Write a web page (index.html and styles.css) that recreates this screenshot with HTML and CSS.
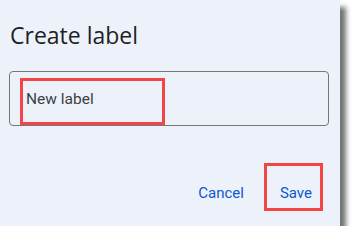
FILE: index.html
```html
<!DOCTYPE html>
<html>
<head>
<meta charset="utf-8">
<link rel="stylesheet" href="styles.css">
</head>
<body>
<div class="dialog">
  <h1 class="title">Create label</h1>
  <div class="field">
    <span class="field-text">New label</span>
    <span class="mark mark-input"></span>
  </div>
  <div class="actions">
    <button class="btn">Cancel</button>
    <button class="btn btn-save">Save<span class="mark mark-save"></span></button>
  </div>
</div>
</body>
</html>
```
FILE: styles.css
```css
html, body {
  margin: 0;
  padding: 0;
  background: #ffffff;
}
.dialog {
  width: 340px;
  height: 226px;
  background: #edf2fa;
  box-shadow: 6px 7px 5px rgba(0, 0, 0, 0.55);
  box-sizing: border-box;
  padding: 20px 11px 0 9px;
  display: flex;
  flex-direction: column;
  font-family: Roboto, "Liberation Sans", sans-serif;
}
.title {
  margin: 0 0 0 1px;
  font-family: "Open Sans", sans-serif;
  font-weight: 400;
  font-size: 23px;
  line-height: 30px;
  color: #1f1f1f;
}
.field {
  position: relative;
  margin-top: 21px;
  height: 53px;
  border: 1px solid #747775;
  border-radius: 4px;
  display: flex;
  align-items: center;
  padding-left: 16px;
}
.field-text {
  font-size: 15.5px;
  color: #3c4043;
}
.mark {
  position: absolute;
  border: 3px solid #f24545;
  box-sizing: border-box;
}
.mark-input {
  left: 10px;
  top: 6px;
  width: 145px;
  height: 47px;
}
.actions {
  display: flex;
  justify-content: flex-end;
  margin-top: 57px;
  gap: 36px;
}
.btn {
  position: relative;
  background: none;
  border: 0;
  padding: 0;
  font-family: Roboto, "Liberation Sans", sans-serif;
  font-size: 15px;
  font-weight: 400;
  color: #0b57d0;
  height: 20px;
  line-height: 20px;
}
.btn-save {
  margin-right: 17px;
}
.mark-save {
  left: -16px;
  top: -20px;
  width: 59px;
  height: 48px;
}
```
